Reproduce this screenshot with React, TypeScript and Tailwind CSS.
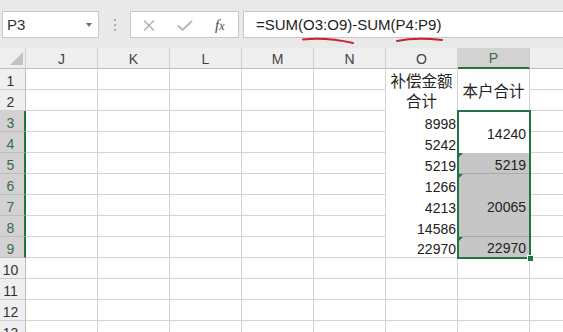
import React from 'react';

const rows = Array.from({ length: 13 }, (_, i) => i + 1);
const oValues = ['8998', '5242', '5219', '1266', '4213', '14586', '22970'];

const Tri = () => (
  <span className="absolute left-0 top-0 h-0 w-0 border-t-[5px] border-r-[5px] border-t-[#217346] border-r-transparent"></span>
);

const ColHeader: React.FC<{ label: string }> = ({ label }) => (
  <div className="flex h-[21px] items-center justify-center border-r border-b border-r-[#d0d0d0] border-b-[#bfbfbf] bg-[#efefef] pt-[2px] text-[14px] text-[#444]">
    {label}
  </div>
);

const EmptyColumn: React.FC<{ label: string }> = ({ label }) => (
  <div className="flex w-[72px] flex-col">
    <ColHeader label={label} />
    {rows.map((r) => (
      <div key={r} className="h-[21px] border-r border-b border-[#d4d4d4]"></div>
    ))}
  </div>
);

const App: React.FC = () => {
  return (
    <div className="relative h-[332px] w-[563px] overflow-hidden bg-white font-['Liberation_Sans','Noto_Sans_CJK_SC',sans-serif] text-[#222]">
      {/* Formula bar */}
      <div className="flex h-[48px] items-start bg-[#e9e9e9] pt-[11px] pl-[2px]">
        <div className="flex h-[27px] w-[97px] items-center border border-[#c8c8c8] bg-white pl-[4px] pt-[1px] text-[15px] text-[#333]">
          P3
          <span className="mr-[6px] ml-auto h-0 w-0 border-t-[4px] border-r-[3.5px] border-l-[3.5px] border-t-[#707070] border-r-transparent border-l-transparent"></span>
        </div>
        <div className="flex h-[27px] w-[31px] flex-col items-center justify-center gap-[3px] pt-[1px]">
          <span className="h-[2px] w-[2px] bg-[#b0b0b0]"></span>
          <span className="h-[2px] w-[2px] bg-[#b0b0b0]"></span>
          <span className="h-[2px] w-[2px] bg-[#b0b0b0]"></span>
        </div>
        <div className="flex h-[27px] w-[109px] items-center border border-[#c8c8c8] bg-white pt-[2px]">
          <svg width="12" height="11" viewBox="0 0 12 11" className="ml-[12px]">
            <path d="M1 0.5 L11 10.5 M11 0.5 L1 10.5" stroke="#b5b5b5" strokeWidth="1.6" fill="none" />
          </svg>
          <svg width="16" height="11" viewBox="0 0 16 11" className="ml-[22px]">
            <path d="M1 5.5 L5.5 10 L15 1" stroke="#b5b5b5" strokeWidth="1.8" fill="none" />
          </svg>
          <span className="ml-[22px] font-['Liberation_Serif',serif] text-[15px] italic leading-none text-[#444]">
            f<span className="text-[12px]">x</span>
          </span>
        </div>
        <div className="ml-[4px] flex h-[27px] flex-1 items-center border border-r-0 border-[#c8c8c8] bg-white pl-[12px] pt-[1px] text-[15px] text-[#222]">
          =SUM(O3:O9)-SUM(P4:P9)
        </div>
      </div>

      {/* Sheet */}
      <div className="flex">
        {/* Row headers */}
        <div className="flex w-[26px] flex-col">
          <div className="h-[21px] border-r border-b border-r-[#d0d0d0] border-b-[#bfbfbf] bg-[#efefef]">
            <svg width="25" height="20" viewBox="0 0 25 20">
              <polygon points="10,17 23,17 23,4" fill="#c2c2c2" />
            </svg>
          </div>
          {rows.map((r) => {
            const sel = r >= 3 && r <= 9;
            return (
              <div
                key={r}
                className={
                  sel
                    ? 'flex h-[21px] items-center justify-center border-b border-r-2 border-b-[#bdbdbd] border-r-[#217346] bg-[#d2d2d2] pr-[3px] pt-[4px] text-[14px] text-[#3b6b4b]'
                    : 'flex h-[21px] items-center justify-center border-r border-b border-r-[#bfbfbf] border-b-[#d0d0d0] bg-[#efefef] pr-[4px] pt-[4px] text-[14px] text-[#333]'
                }
              >
                {r}
              </div>
            );
          })}
        </div>

        <EmptyColumn label="J" />
        <EmptyColumn label="K" />
        <EmptyColumn label="L" />
        <EmptyColumn label="M" />
        <EmptyColumn label="N" />

        {/* Column O */}
        <div className="flex w-[72px] flex-col">
          <ColHeader label="O" />
          <div className="flex h-[42px] flex-col items-center justify-center border-r border-[#d4d4d4] pt-[3px] text-[15.5px] leading-[20px]">
            <span>补偿金额</span>
            <span>合计</span>
          </div>
          {oValues.map((v, i) => (
            <div
              key={v + i}
              className={
                i === oValues.length - 1
                  ? 'flex h-[21px] items-end justify-end border-r border-b border-[#d4d4d4] pr-[1px] text-[14px] leading-[15px]'
                  : 'flex h-[21px] items-end justify-end border-r border-[#d4d4d4] pr-[1px] text-[14px] leading-[15px]'
              }
            >
              {v}
            </div>
          ))}
          {rows.slice(9).map((r) => (
            <div key={r} className="h-[21px] border-r border-b border-[#d4d4d4]"></div>
          ))}
        </div>

        {/* Column P */}
        <div className="flex w-[72px] flex-col">
          <div className="flex h-[21px] items-center justify-center border-r border-b-2 border-r-[#d0d0d0] border-b-[#217346] bg-[#d2d2d2] pt-[2px] text-[14px] text-[#3b6b4b]">
            P
          </div>
          <div className="flex h-[42px] items-center justify-center border-r border-b border-[#d4d4d4] pt-[4px] text-[15.5px]">
            本户合计
          </div>
          <div className="relative flex flex-col">
            <div className="flex h-[42px] items-center justify-end border-r border-[#d4d4d4] bg-white pr-[3px] pt-[4px] text-[14px]">
              14240
            </div>
            <div className="relative flex h-[21px] items-center justify-end border-r border-b border-[#a9a9a9] bg-[#c6c6c6] pr-[3px] pt-[4px] text-[14px]">
              <Tri />
              5219
            </div>
            <div className="relative flex h-[63px] items-center justify-end border-r border-b border-[#a9a9a9] bg-[#c6c6c6] pr-[3px] pt-[4px] text-[14px]">
              <Tri />
              20065
            </div>
            <div className="relative flex h-[21px] items-center justify-end border-r border-b border-[#a9a9a9] bg-[#c6c6c6] pr-[3px] pt-[3px] text-[14px]">
              <Tri />
              22970
            </div>
            <div className="pointer-events-none absolute -inset-px border-2 border-[#217346]"></div>
            <div className="absolute -right-[4px] -bottom-[4px] h-[7px] w-[7px] border border-white bg-[#217346]"></div>
          </div>
          {rows.slice(9).map((r) => (
            <div key={r} className="h-[21px] border-r border-b border-[#d4d4d4]"></div>
          ))}
        </div>

        {/* Column Q (partial) */}
        <div className="flex flex-1 flex-col">
          <div className="h-[21px] border-b border-b-[#bfbfbf] bg-[#efefef]"></div>
          {rows.map((r) => (
            <div key={r} className="h-[21px] border-b border-[#d4d4d4]"></div>
          ))}
        </div>
      </div>

      {/* Red hand-drawn underlines */}
      <svg className="pointer-events-none absolute top-0 left-0" width="563" height="50" viewBox="0 0 563 50">
        <path d="M303 39.5 Q326 37 353 43" stroke="#c8232a" strokeWidth="2" fill="none" strokeLinecap="round" />
        <path d="M397 41 Q416 37 442 40" stroke="#c8232a" strokeWidth="2" fill="none" strokeLinecap="round" />
      </svg>
    </div>
  );
};

export default App;
